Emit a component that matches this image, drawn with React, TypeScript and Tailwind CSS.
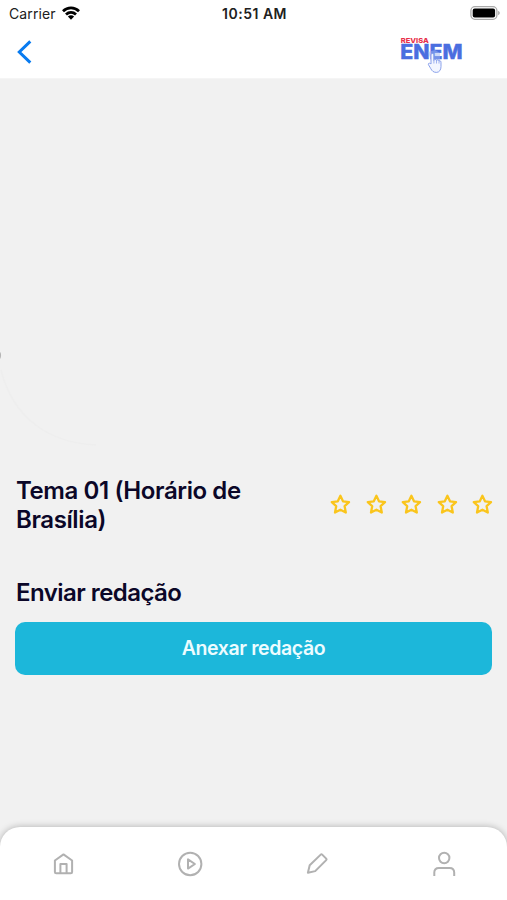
import React from 'react';

const STARS = [1, 2, 3, 4, 5];

function StatusBar() {
  return (
    <div className="flex h-7 items-center justify-between pl-[7px] pr-[7px] text-[14px] leading-none text-[#202020]">
      <div className="flex flex-1 items-center gap-[6px] pl-[2px]">
        <span className="w-[47px] whitespace-nowrap tracking-[0.1px]">Carrier</span>
        <svg className="-mt-[2px] h-[14px] w-[18px]" viewBox="0 0 18 14" fill="none" stroke="#000" strokeWidth="2.8">
          <path d="M1 5.2C5.6.8 12.4.8 17 5.2" />
          <path d="M4 8.5c2.9-2.7 7.1-2.7 10 0" />
          <path d="M5.9 10.5c1.8-1.6 4.4-1.6 6.2 0L9 13.8z" fill="#000" stroke="none" />
        </svg>
      </div>
      <span className="whitespace-nowrap font-semibold tracking-[0.5px]">10:51 AM</span>
      <div className="flex flex-1 justify-end">
        <svg className="-mt-[2px] h-[14px] w-[30px]" viewBox="0 0 30 14">
          <rect x="0.9" y="0.7" width="26" height="12.6" rx="4" fill="#fff" stroke="#aaa" strokeWidth="1.3" />
          <rect x="2.7" y="2.5" width="22.4" height="9" rx="2" fill="#000" />
          <path d="M28.1 4.8v4.5c2.2-.8 2.2-3.7 0-4.5z" fill="#aaa" />
        </svg>
      </div>
    </div>
  );
}

function Logo() {
  return (
    <svg className="h-[40px] w-[66px]" viewBox="0 0 66 40">
      <text x="0.8" y="8.8" fontSize="6.8" fontWeight="800" fill="#e8304a" textLength="28" lengthAdjust="spacingAndGlyphs">
        REVISA
      </text>
      <text
        x="0.3"
        y="25.3"
        fontSize="20"
        fontWeight="800"
        fill="#4a6ee0"
        stroke="#4a6ee0"
        strokeWidth="0.4"
        textLength="62.3"
        lengthAdjust="spacingAndGlyphs"
      >
        ENEM
      </text>
      <path d="M28 18l7-2 5 3v8h-9z" fill="#9fb5f1" opacity="0.5" />
      <path
        d="M31 30V21c0-2 2.8-2 2.8 0v5.5c.3-1.3 2.5-1.3 2.7 0 .6-1 2.4-.8 2.5.5 1.5-.7 2 .4 2 1.5v4.1c0 3.2-1.7 5.8-4.5 5.8-3.2 0-4.5-1.5-5.6-3.6l-2.4-4c-.8-1.5 1.1-2.3 2.5-.8z"
        fill="#f3f6ff"
        stroke="#7d96e8"
        strokeWidth="0.9"
      />
      <path d="M33.9 26.5v3m2.6-3v3m2.5-2.4v2.5" stroke="#7d96e8" strokeWidth="0.7" />
    </svg>
  );
}

function Star() {
  return (
    <svg className="h-[22px] w-[22px]" viewBox="0 0 22 22" fill="none" stroke="#fac51c" strokeWidth="2.3" strokeLinejoin="round">
      <path d="M11.4 2.8l2.6 5.5 6 .8-4.4 4.1 1.2 6.3-5.4-2.8L6 19.5l1.2-6.3-4.4-4.1 6-.8z" />
    </svg>
  );
}

function TabBar() {
  return (
    <nav className="grid h-[73px] grid-cols-4 rounded-t-[20px] bg-white pt-[22px] shadow-[0_0_7px_rgba(0,0,0,0.28)]">
      <button className="flex h-[30px] items-center justify-center" aria-label="Início">
        <svg className="h-[30px] w-[30px]" viewBox="0 0 30 30" fill="none" stroke="#b1b1b1" strokeWidth="2" strokeLinejoin="round">
          <path d="M6.9 11.5l8.6-6.1 8.6 6.1v11.4c0 .8-.5 1.3-1.3 1.3H8.2c-.8 0-1.3-.5-1.3-1.3z" />
          <path d="M12.4 24.2V15h6.2v9.2" />
        </svg>
      </button>
      <button className="flex h-[30px] items-center justify-center" aria-label="Aulas">
        <svg className="h-[30px] w-[30px]" viewBox="0 0 30 30" fill="none" stroke="#b1b1b1" strokeWidth="2" strokeLinejoin="round">
          <circle cx="15.2" cy="15" r="11.2" />
          <path d="M13 10.4v9.2l6.9-4.6z" />
        </svg>
      </button>
      <button className="flex h-[30px] items-center justify-center" aria-label="Redação">
        <svg className="h-[30px] w-[30px]" viewBox="0 0 30 30" fill="none" stroke="#b1b1b1" strokeWidth="2" strokeLinejoin="round">
          <path d="M5.9 23.8l1.8-7.5L18.7 5.6c.5-.5 1-.5 1.5 0l4 4c.5.5.5 1 0 1.5l-11 11z" />
        </svg>
      </button>
      <button className="flex h-[30px] items-center justify-center" aria-label="Perfil">
        <svg className="h-[30px] w-[30px]" viewBox="0 0 30 30" fill="none" stroke="#b1b1b1" strokeWidth="2">
          <circle cx="15.2" cy="9" r="5.2" />
          <path d="M5.3 27v-3.5c0-2.9 1.8-4.6 4.6-4.6h10.7c2.8 0 4.6 1.7 4.6 4.6V27" />
        </svg>
      </button>
    </nav>
  );
}

export default function App() {
  return (
    <div className="flex h-[900px] w-[507px] flex-col overflow-hidden bg-[#f1f1f1] font-['Inter',sans-serif] text-[#0b0728]">
      <header className="h-[79px] border-b border-[#f5f5f5] bg-white">
        <StatusBar />
        <div className="flex items-start justify-between pl-[16px] pr-[41px] pt-[6px]">
          <button className="mt-[6px]" aria-label="Voltar">
            <svg className="h-6 w-4" viewBox="0 0 16 24" fill="none" stroke="#087bf0" strokeWidth="3">
              <path d="M14.3 1.3L3.3 12l11 10.7" />
            </svg>
          </button>
          <Logo />
        </div>
      </header>

      <main className="flex flex-1 flex-col">
        {/* video area, still empty with the edge of its loader showing */}
        <div className="h-[397px] pt-[271px]">
          <svg className="h-[100px] w-[100px]" viewBox="0 0 100 100" fill="none">
            <path d="M0 2c1.4 1 1.4 5 0 7z" fill="#b5b5b5" />
            <path d="M1 20c12 48 48 73 95 75" stroke="#eeeeee" strokeWidth="1.5" />
          </svg>
        </div>

        <div className="flex items-start justify-between pl-4 pr-[14px]">
          <h1 className="w-[240px] text-[24px] font-semibold leading-[29px] tracking-[-0.4px]">
            Tema 01 (Horário de Brasília)
          </h1>
          <div className="mt-[17px] flex gap-[13.5px]">
            {STARS.map((n) => (
              <Star key={n} />
            ))}
          </div>
        </div>

        <section className="px-[15px] pt-[44px]">
          <h2 className="pl-px text-[24px] font-semibold leading-[29px] tracking-[-0.55px]">Enviar redação</h2>
          <button className="mt-[14.5px] h-[53px] w-full rounded-[10px] bg-[#1cb7da] pt-px text-[19.5px] font-semibold tracking-[-0.4px] text-[#edfcff]">
            Anexar redação
          </button>
        </section>
      </main>

      <TabBar />
    </div>
  );
}
